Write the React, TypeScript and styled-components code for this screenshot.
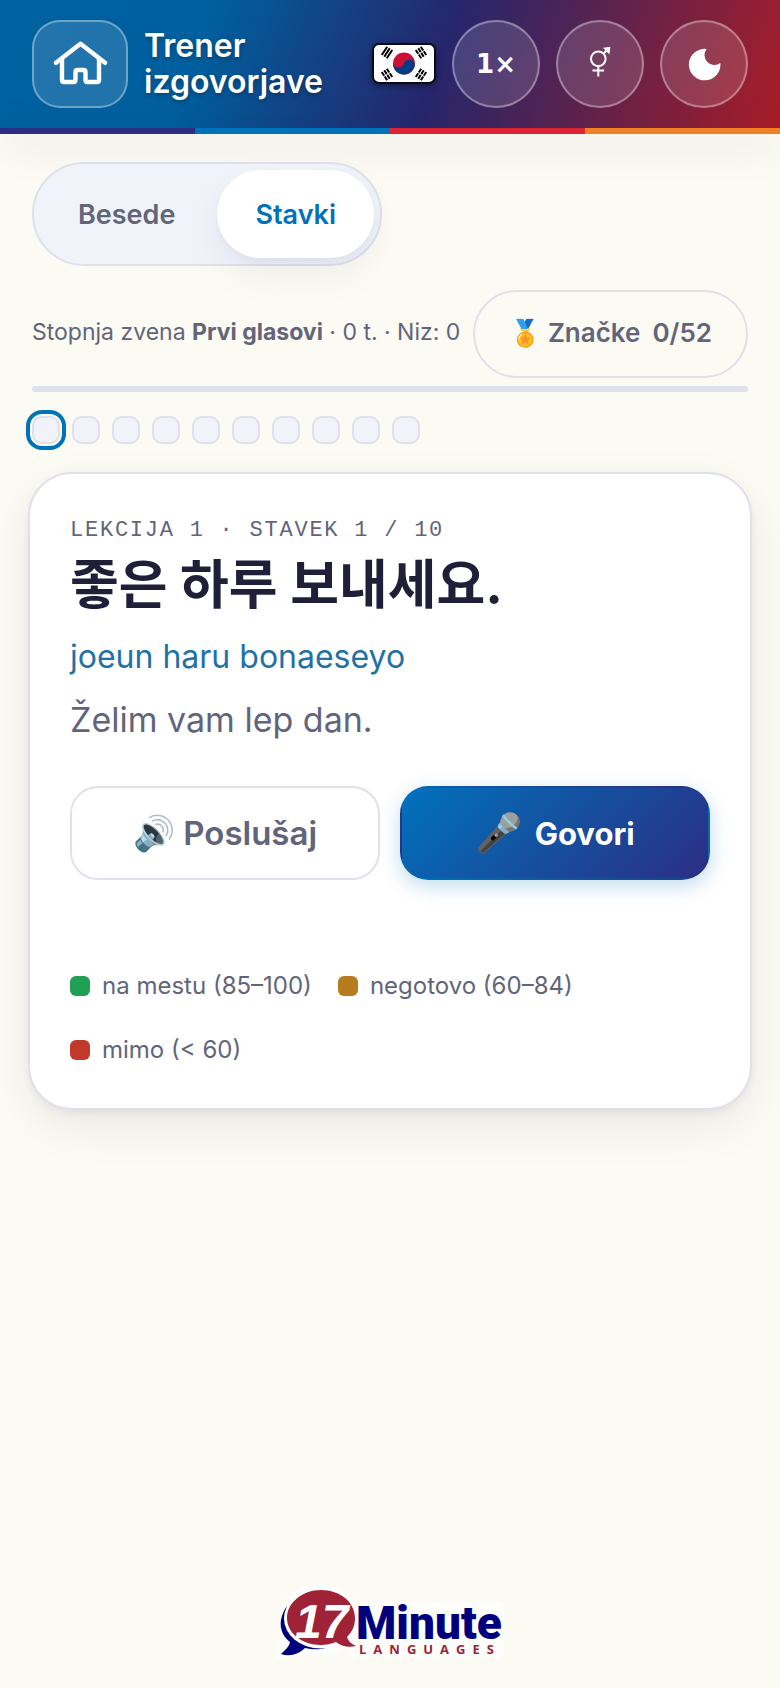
import React from "react";
import styled, { createGlobalStyle } from "styled-components";

const GlobalStyle = createGlobalStyle`
  * {
    box-sizing: border-box;
  }

  body {
    margin: 0;
    background: #fbfaf3;
    color: #626579;
    font-family: Inter, "Noto Sans CJK KR", sans-serif;
  }

  button {
    font: inherit;
    color: inherit;
    cursor: pointer;
  }
`;

const Page = styled.div`
  min-height: 100vh;
  display: flex;
  flex-direction: column;
`;

const Header = styled.header`
  display: flex;
  align-items: center;
  gap: 16px;
  padding: 20px 32px;
  color: #fff;
  background: linear-gradient(110deg, #0062a1 0%, #005f9e 26%, #26266c 56%, #a91d27 100%);
`;

const Stripe = styled.div`
  height: 6px;
  background: linear-gradient(
    90deg,
    #2b2e83 25%,
    #0072bc 25% 50%,
    #dc2434 50% 75%,
    #f08021 75%
  );
  box-shadow: 0 8px 40px rgba(20, 20, 50, 0.22);
`;

const HomeLink = styled.a`
  flex: none;
  width: 96px;
  height: 88px;
  display: flex;
  align-items: center;
  justify-content: center;
  border: 2px solid rgba(255, 255, 255, 0.35);
  border-radius: 28px;
  background: rgba(255, 255, 255, 0.13);
  color: #fff;
`;

const Title = styled.h1`
  flex: 1;
  margin: 0;
  font-size: 32px;
  line-height: 36px;
  font-weight: 600;
  text-shadow: 0 2px 4px rgba(0, 0, 0, 0.3);
`;

const Flag = styled.svg`
  flex: none;
  filter: drop-shadow(0 2px 3px rgba(0, 0, 0, 0.4));
`;

const RoundButton = styled.button`
  flex: none;
  width: 88px;
  height: 88px;
  padding: 0;
  display: flex;
  align-items: center;
  justify-content: center;
  border: 2px solid rgba(255, 255, 255, 0.35);
  border-radius: 50%;
  background: rgba(255, 255, 255, 0.13);
  font-family: "DejaVu Sans", sans-serif;
  font-size: 26px;
  font-weight: 700;
`;

const Main = styled.main`
  flex: 1;
  display: flex;
  flex-direction: column;
  padding: 28px 28px 0;
`;

const Controls = styled.section`
  padding: 0 4px;
`;

const Tabs = styled.div`
  width: fit-content;
  display: flex;
  gap: 4px;
  padding: 6px;
  border: 2px solid #dfe0ec;
  border-radius: 52px;
  background: #f0f3fa;
`;

const Tab = styled.button<{ $active?: boolean }>`
  height: 88px;
  padding: 0 38px;
  border: 0;
  border-radius: 44px;
  font-size: 27px;
  font-weight: 600;
  background: ${({ $active }) => ($active ? "#fff" : "transparent")};
  color: ${({ $active }) => ($active ? "#0072bc" : "#626579")};
  box-shadow: ${({ $active }) =>
    $active ? "0 4px 8px rgba(20, 20, 50, 0.03), 0 16px 40px rgba(20, 20, 50, 0.06)" : "none"};
`;

const Stats = styled.div`
  display: flex;
  align-items: center;
  justify-content: space-between;
  margin-top: 24px;
`;

const StatsText = styled.p`
  margin: 0;
  padding-bottom: 4px;
  font-size: 23px;
  line-height: 32px;
  white-space: nowrap;
`;

const BadgeButton = styled.button`
  height: 88px;
  padding: 0 34px 4px;
  display: flex;
  align-items: center;
  gap: 12px;
  border: 2px solid #dfe0ec;
  border-radius: 44px;
  background: transparent;
  font-size: 26px;
  font-weight: 600;
  white-space: nowrap;
`;

const Progress = styled.div`
  height: 6px;
  margin-top: 8px;
  border-radius: 3px;
  background: #dfe0ec;
`;

const Steps = styled.div`
  display: flex;
  gap: 12px;
  margin-top: 24px;
`;

const Step = styled.button<{ $active?: boolean }>`
  width: 28px;
  height: 28px;
  padding: 0;
  border: 2px solid #dfe0ec;
  border-radius: 10px;
  background: #f0f3fa;
  outline: ${({ $active }) => ($active ? "4px solid #0072b8" : "none")};
  outline-offset: 2px;
`;

const Card = styled.article`
  margin-top: 28px;
  padding: 40px;
  border: 2px solid #dfe0ec;
  border-radius: 44px;
  background: #fff;
  box-shadow: 0 4px 8px rgba(20, 20, 50, 0.05), 0 16px 48px rgba(20, 20, 50, 0.07);
`;

const Eyebrow = styled.p`
  margin: 0;
  font-family: "Liberation Mono", monospace;
  font-size: 22px;
  line-height: 34px;
  letter-spacing: 0.08em;
  text-transform: uppercase;
`;

const Phrase = styled.h2`
  margin: 0;
  color: #1f1f38;
  font-size: 53px;
  line-height: 74px;
  font-weight: 700;
`;

const Romanized = styled.p`
  margin: 12px 0 0;
  color: #1f71a6;
  font-size: 32px;
  line-height: 46px;
`;

const Meaning = styled.p`
  margin: 16px 0 0;
  font-size: 34px;
  line-height: 48px;
`;

const Actions = styled.div`
  display: grid;
  grid-template-columns: 1fr 1fr;
  gap: 20px;
  margin-top: 42px;
`;

const ActionButton = styled.button<{ $primary?: boolean }>`
  height: 94px;
  display: flex;
  align-items: center;
  justify-content: center;
  gap: ${({ $primary }) => ($primary ? "12px" : "8px")};
  border: 2px solid ${({ $primary }) => ($primary ? "transparent" : "#dfe0ec")};
  border-radius: 28px;
  font-size: ${({ $primary }) => ($primary ? "31px" : "33px")};
  font-weight: ${({ $primary }) => ($primary ? 700 : 600)};
  color: ${({ $primary }) => ($primary ? "#fff" : "#626579")};
  background: ${({ $primary }) =>
    $primary ? "linear-gradient(135deg, #0072bc, #2b2e83)" : "transparent"};
  box-shadow: ${({ $primary }) => ($primary ? "0 6px 20px rgba(0, 114, 188, 0.25)" : "none")};
`;

const Emoji = styled.span<{ $size: number }>`
  font-family: "Noto Color Emoji", sans-serif;
  font-size: ${({ $size }) => $size}px;
  line-height: 1;
`;

const Legend = styled.ul`
  display: flex;
  flex-wrap: wrap;
  gap: 32px 26px;
  margin: 90px 0 0;
  padding: 0 0 2px;
  list-style: none;
  font-size: 24px;
  line-height: 32px;
`;

const LegendItem = styled.li`
  display: flex;
  align-items: center;
  gap: 12px;
`;

const Swatch = styled.span<{ $color: string }>`
  width: 20px;
  height: 20px;
  border-radius: 6px;
  background: ${({ $color }) => $color};
`;

const Footer = styled.footer`
  display: flex;
  justify-content: center;
  padding-bottom: 24px;
`;

const steps = Array.from({ length: 10 }, (_, index) => index + 1);

const legend = [
  { color: "#1fa054", label: "na mestu (85–100)" },
  { color: "#b67a1f", label: "negotovo (60–84)" },
  { color: "#c0392b", label: "mimo (< 60)" },
];

const HomeIcon = () => (
  <svg
    width="56"
    height="48"
    viewBox="0 0 56 48"
    fill="none"
    stroke="currentColor"
    strokeWidth="4.4"
    strokeLinecap="round"
    strokeLinejoin="round"
    aria-hidden="true"
  >
    <path d="M4 22.800 28.500 3.800 53 22.800" />
    <path d="M10 19v21q0 2 2 2h9.500q2 0 2-2v-8q0-2 2-2h6q2 0 2 2v8q0 2 2 2H45q2 0 2-2V19" />
  </svg>
);

const Trigram = ({ x, y, angle, broken }: { x: number; y: number; angle: number; broken: string }) => (
  <g
    transform={`translate(${x} ${y}) rotate(${angle})`}
    stroke="#000"
    strokeWidth="2"
    strokeDasharray={broken}
  >
    <path d="M-5-3h10" />
    <path d="M-5 0h10" />
    <path d="M-5 3h10" />
  </g>
);

const KoreanFlag = () => (
  <Flag width="64" height="42" viewBox="0 0 64 42" role="img" aria-label="한국어">
    <rect x="1" y="1" width="62" height="39" rx="6" fill="#fff" stroke="#0b0b14" strokeWidth="2" />
    <circle cx="32" cy="20.500" r="11" fill="#cd1034" />
    <path
      transform="rotate(15 32 20.500)"
      d="M21 20.500a5.500 5.500 0 0 0 11 0 5.500 5.500 0 0 1 11 0 11 11 0 0 1-22 0z"
      fill="#003c87"
    />
    <Trigram x={15} y={9.5} angle={-57} broken="none" />
    <Trigram x={49} y={9.5} angle={57} broken="4.500 1" />
    <Trigram x={15} y={31.5} angle={57} broken="4.500 1" />
    <Trigram x={49} y={31.5} angle={-57} broken="4.500 1" />
  </Flag>
);

const GenderIcon = () => (
  <svg width="24" height="34" viewBox="0 0 24 34" fill="none" stroke="currentColor" strokeWidth="2" aria-hidden="true">
    <circle cx="10.300" cy="11.800" r="7.300" />
    <path d="M10.300 19v10.500M4.500 23.500h11.600M15.500 6.600 20 2" />
    <path d="M15 .8 22.400-.2l-1 7.600z" fill="currentColor" stroke="none" />
  </svg>
);

const MoonIcon = () => (
  <svg width="34" height="34" viewBox="0 0 34 34" fill="currentColor" aria-hidden="true">
    <path d="M19.700 1.900A15.800 15.800 0 1 0 33.400 16 9.900 9.900 0 0 1 19.700 1.900z" />
  </svg>
);

const Logo = () => (
  <svg width="236" height="84" viewBox="0 0 236 84" role="img" aria-label="17 Minute Languages">
    <g fill="#fff" stroke="#fff" strokeWidth="12" strokeLinejoin="round" opacity="0.7">
      <ellipse cx="48" cy="40" rx="34" ry="30" />
      <path d="M14 50Q14 66 9 73q14 1 22-6z" />
      <path d="M84 28h142v44H84z" />
    </g>
    <path
      d="M15 26C4 42 9 55 18 62c-1 5-5 8-9 12 9 3 18 0 24-6 13 3 24 1 33-7l-18-1C28 62 11 48 15 26z"
      fill="#00007c"
    />
    <ellipse cx="48.500" cy="38.500" rx="36.500" ry="30" fill="#fff" />
    <path
      d="M49 10c19 0 34 12 34 28 0 8-3 14-8 19 1 4 4 7 9 9-8 2-15 0-20-4-5 2-10 3-15 3-19 0-34-12-34-27S30 10 49 10z"
      fill="#9f2236"
    />
    <text
      x="23"
      y="58"
      fill="#fff"
      fontFamily="Liberation Sans, sans-serif"
      fontSize="48"
      fontWeight="700"
      fontStyle="italic"
    >
      17
    </text>
    <text x="84" y="59" fill="#00007c" fontFamily="Roboto, sans-serif" fontSize="46" fontWeight="900">
      Minute
    </text>
    <text
      x="87"
      y="74"
      fill="#9f2236"
      fontFamily="Open Sans, sans-serif"
      fontSize="13"
      fontWeight="700"
      letterSpacing="7"
    >
      LANGUAGES
    </text>
  </svg>
);

const App = () => (
  <>
    <GlobalStyle />
    <Page>
      <Header>
        <HomeLink href="#" aria-label="Domov">
          <HomeIcon />
        </HomeLink>
        <Title>Trener izgovorjave</Title>
        <KoreanFlag />
        <RoundButton type="button">1×</RoundButton>
        <RoundButton type="button" aria-label="Glas">
          <GenderIcon />
        </RoundButton>
        <RoundButton type="button" aria-label="Temni način">
          <MoonIcon />
        </RoundButton>
      </Header>
      <Stripe />
      <Main>
        <Controls>
          <Tabs role="tablist">
            <Tab type="button" role="tab" aria-selected="false">Besede</Tab>
            <Tab type="button" role="tab" aria-selected="true" $active>Stavki</Tab>
          </Tabs>
          <Stats>
            <StatsText>
              Stopnja zvena <strong>Prvi glasovi</strong> · 0 t. · Niz: 0
            </StatsText>
            <BadgeButton type="button">
              <span>
                <Emoji $size={26}>🏅</Emoji> Značke
              </span>
              <span>0/52</span>
            </BadgeButton>
          </Stats>
          <Progress />
          <Steps>
            {steps.map((step) => (
              <Step key={step} type="button" $active={step === 1} aria-label={`Stavek ${step}`} />
            ))}
          </Steps>
        </Controls>
        <Card>
          <Eyebrow>Lekcija 1 · Stavek 1 / 10</Eyebrow>
          <Phrase lang="ko">좋은 하루 보내세요.</Phrase>
          <Romanized>joeun haru bonaeseyo</Romanized>
          <Meaning>Želim vam lep dan.</Meaning>
          <Actions>
            <ActionButton type="button">
              <Emoji $size={34}>🔊</Emoji>
              Poslušaj
            </ActionButton>
            <ActionButton type="button" $primary>
              <Emoji $size={38}>🎤</Emoji>
              Govori
            </ActionButton>
          </Actions>
          <Legend>
            {legend.map(({ color, label }) => (
              <LegendItem key={label}>
                <Swatch $color={color} />
                {label}
              </LegendItem>
            ))}
          </Legend>
        </Card>
      </Main>
      <Footer>
        <Logo />
      </Footer>
    </Page>
  </>
);

export default App;
